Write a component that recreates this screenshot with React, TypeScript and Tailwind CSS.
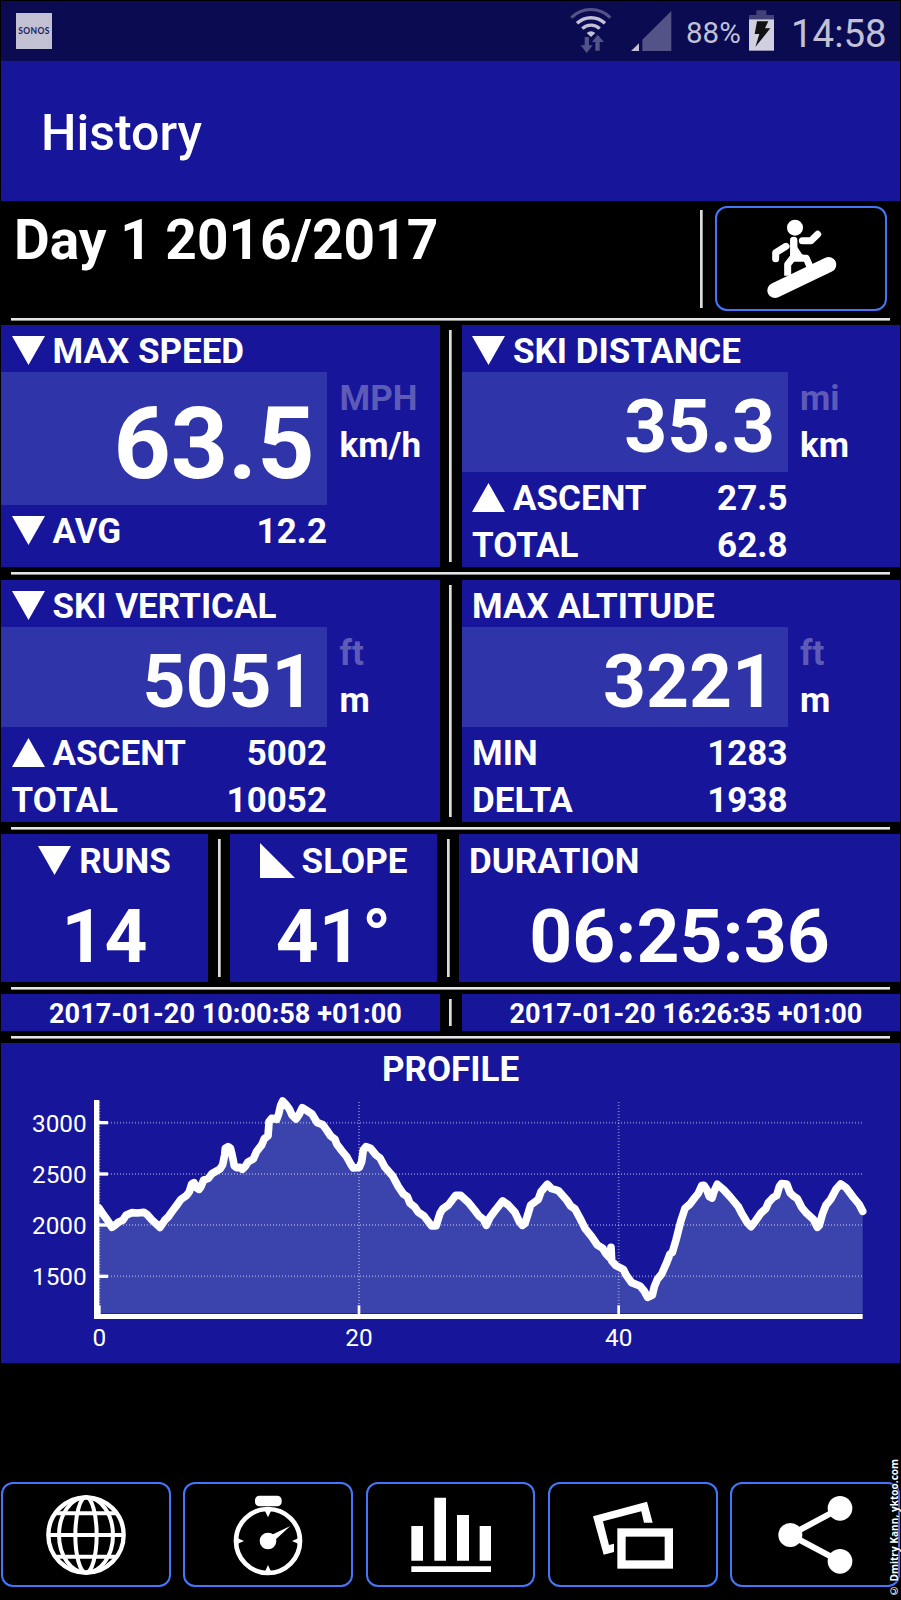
import React from 'react';

interface RowProps {
  icon?: 'down' | 'up';
  label: string;
  value?: string;
}

interface StatPanelProps {
  title: string;
  icon?: 'down' | 'up';
  value: string;
  units: [string, string];
  rows: RowProps[];
  large?: boolean;
}

const Triangle: React.FC<{ dir: 'down' | 'up' }> = ({ dir }) => (
  <svg width="33" height="29" viewBox="0 0 33 29" className="mr-2 shrink-0" fill="#fff">
    <path d={dir === 'down' ? 'M0 0H33L16.5 29Z' : 'M0 29H33L16.5 0Z'} />
  </svg>
);

const HLine: React.FC<{ tall?: boolean }> = ({ tall }) => (
  <div className={`flex shrink-0 items-center px-2.5 ${tall ? 'h-[13px]' : 'h-3'}`}>
    <div className="h-[3px] w-full border-b border-[#8a8a8a] bg-[#e4e4e4]" />
  </div>
);

const VLine: React.FC = () => (
  <div className="flex w-[22px] shrink-0 justify-center py-[5px]">
    <div className="w-[3px] border-r border-[#9a9a9a] bg-[#dcdcdc]" />
  </div>
);

const Row: React.FC<RowProps> = ({ icon, label, value }) => (
  <div className="flex h-[47.3px] w-[326px] items-center pl-[10.5px] pt-1">
    {icon && <Triangle dir={icon} />}
    <span className="pt-[2px]">{label}</span>
    {value && <span className="ml-auto pt-[2px]">{value}</span>}
  </div>
);

const StatPanel: React.FC<StatPanelProps> = ({ title, icon, value, units, rows, large }) => (
  <section className="flex-1 bg-[#17159a]">
    <Row icon={icon} label={title} />
    <div className="flex">
      <div
        className={`flex w-[326px] items-center justify-end bg-[#2f35a9] pr-[12.5px] ${
          large ? 'h-[132.7px] pt-2.5 text-[100px]' : 'h-[100px] pt-[7px] text-[75px]'
        }`}
      >
        {value}
      </div>
      <div className="pl-[12.5px] pt-[3px] leading-[47px]">
        <p className="text-[#5d5bb7]">{units[0]}</p>
        <p>{units[1]}</p>
      </div>
    </div>
    {rows.map((row) => (
      <Row key={row.label} {...row} />
    ))}
  </section>
);

const IconButton: React.FC<{ children: React.ReactNode; className?: string }> = ({
  children,
  className = 'flex-1',
}) => (
  <button
    className={`flex h-[105px] items-center justify-center rounded-xl border-2 border-[#4377fb] bg-black ${className}`}
  >
    <svg width="80" height="80" viewBox="0 0 240 240" fill="#fff" className="overflow-visible">
      {children}
    </svg>
  </button>
);

const StatusBar: React.FC = () => (
  <div className="flex h-[60px] shrink-0 bg-[#0b0b52] text-[#c2c1d6]">
    <div className="ml-[15px] mt-3 flex h-9 w-9 items-center justify-center bg-[#c2c1d3] font-['Lato'] text-[8.5px] font-bold tracking-[0.4px] text-[#1b1a60]">
      SONOS
    </div>
    <svg width="102" height="60" viewBox="0 0 306 180" className="ml-auto mr-[14px]" fill="none">
      {/* Wifi */}
      <g transform="translate(0 -3)">
        <path d="M4 53A82 82 0 0 1 121 53" stroke="#545387" strokeWidth="9" />
        <path d="M21 70A61 61 0 0 1 105 70" stroke="#c2c1d6" strokeWidth="10" />
        <path d="M37 86A37 37 0 0 1 89 86" stroke="#c2c1d6" strokeWidth="10" />
        <path d="M50 99Q63 89 76 99L63 111Z" fill="#c2c1d6" />
        <path d="M44 111H57V136H68L50 159L32 136H44Z" fill="#545387" />
        <path d="M76 152H89V126H102L83 104L66 126H76Z" fill="#545387" />
      </g>
      {/* Signal */}
      <g transform="translate(0 -3)">
        <path d="M217 119L304 33V153H217Z" fill="#545387" />
        <path d="M207 130V153H183Z" fill="#c2c1d6" />
      </g>
    </svg>
    <span className="mt-[15px] w-[63px] text-[29.5px] leading-[35px]">88%</span>
    <svg width="25" height="41" viewBox="0 0 75 123" className="mt-[9px]">
      <path d="M22 1H52V15H75V28H0V15H22Z" fill="#424178" />
      <path d="M0 28H75V122H0Z" fill="#d1d0e0" />
      <path d="M24 34H58L48 55H64L19 111L31 72H17Z" fill="#111" />
    </svg>
    <span className="ml-[17px] mr-[14px] mt-[10px] w-[95px] text-[38.4px] leading-[46px]">14:58</span>
  </div>
);

const altitudeLine =
  '297,504 310,524 322,540 336,562 348,553 356,546 368,541 378,526 395,518 412,519 432,517 442,524 456,540 480,562 ' +
  '488,550 494,541 505,530 515,516 530,496 543,478 560,466 568,455 575,432 582,428 590,444 597,448 603,440 611,420 ' +
  '625,415 636,401 660,387 668,374 674,345 676,325 684,320 691,324 697,348 703,378 710,383 720,382 727,388 736,379 ' +
  '744,366 760,357 770,334 785,315 793,296 804,288 806,262 807,245 815,235 830,238 836,222 842,196 848,183 858,194 ' +
  '868,207 876,225 888,237 898,222 907,203 918,210 936,222 952,248 968,254 980,270 992,288 1005,298 1010,312 ' +
  '1025,332 1040,350 1052,372 1060,384 1078,382 1085,365 1090,330 1098,320 1112,325 1128,345 1140,354 1155,382 ' +
  '1178,408 1195,440 1210,462 1222,470 1230,490 1245,502 1255,517 1272,528 1295,558 1308,558 1320,520 1328,507 ' +
  '1345,495 1367,466 1382,466 1405,487 1425,512 1437,528 1450,538 1459,556 1470,532 1485,512 1508,483 1525,495 ' +
  '1545,517 1558,545 1567,556 1575,550 1583,525 1592,495 1615,478 1623,455 1642,433 1655,446 1675,452 1700,480 ' +
  '1712,498 1725,507 1740,535 1755,565 1775,590 1792,615 1808,625 1817,640 1831,655 1833,622 1835,662 1848,677 ' +
  '1870,688 1878,704 1895,728 1920,738 1932,752 1943,772 1957,765 1963,740 1972,718 1985,702 2000,668 2010,642 ' +
  '2017,637 2028,600 2042,545 2055,505 2070,492 2085,472 2095,460 2105,437 2112,436 2120,448 2128,470 2136,474 ' +
  '2142,455 2152,433 2170,448 2190,470 2215,500 2225,520 2242,548 2253,560 2265,545 2282,520 2298,505 2305,488 ' +
  '2320,472 2330,467 2338,440 2344,431 2360,432 2370,458 2380,468 2392,476 2405,502 2418,518 2440,538 2452,562 ' +
  '2458,556 2468,520 2478,495 2492,478 2508,448 2522,432 2538,443 2560,472 2578,494 2588,514';

const altitudeTicks = [
  { label: '3000', y: 248 },
  { label: '2500', y: 402 },
  { label: '2000', y: 555 },
  { label: '1500', y: 709 },
];

const distanceTicks = [
  { label: '0', x: 298 },
  { label: '20', x: 1077 },
  { label: '40', x: 1856 },
];

const ProfileChart: React.FC = () => (
  <svg width="899" height="273" viewBox="3 150 2697 819" className="block">
    <polygon points={`297,820 ${altitudeLine} 2588,820`} fill="#3b44ac" />

    {/* Grid */}
    <g stroke="#fff" strokeOpacity="0.38">
      {altitudeTicks.map((t) => (
        <path key={t.label} d={`M324 ${t.y}H2588`} strokeWidth="6" strokeDasharray="3 6" />
      ))}
      {distanceTicks.map((t) => (
        <path key={t.label} d={`M${t.x} 186V796`} strokeWidth="6" strokeDasharray="3 6" />
      ))}
    </g>

    <polyline
      points={altitudeLine}
      fill="none"
      stroke="#fff"
      strokeWidth="23"
      strokeLinecap="round"
      strokeLinejoin="round"
    />

    {/* Axes */}
    <path d="M282 180H298V822H2588V837H282Z" fill="#fff" />
    <g fill="#fff" fontSize="73" fontWeight="400">
      {altitudeTicks.map((t) => (
        <React.Fragment key={t.label}>
          <rect x="296" y={t.y - 5} width="28" height="10" />
          <text x="260" y={t.y + 27} textAnchor="end">
            {t.label}
          </text>
        </React.Fragment>
      ))}
      {distanceTicks.map((t) => (
        <React.Fragment key={t.label}>
          <rect x={t.x - 4} y="796" width="8" height="30" />
          <text x={t.x} y="919" textAnchor="middle">
            {t.label}
          </text>
        </React.Fragment>
      ))}
    </g>
  </svg>
);

export default function App() {
  return (
    <div className="relative flex h-[1600px] w-[901px] flex-col overflow-hidden bg-black p-px font-['Roboto',sans-serif] text-white">
      <StatusBar />

      <header className="flex h-[140px] shrink-0 items-center bg-[#17159a] pl-10 pt-[5px] text-[50px] font-medium">
        History
      </header>

      <div className="flex h-28 shrink-0 text-[55px] font-bold">
        <h1 className="pl-[13px] leading-[78px]">Day 1 2016/2017</h1>
        <div className="ml-auto mt-[9px] h-[98px] w-[3px] border-r border-[#9a9a9a] bg-[#dcdcdc]" />
        <IconButton className="ml-3 mr-[13px] mt-[5px] w-[172px]">
          <circle cx="102" cy="26" r="24" />
          <path d="M88 64Q88 54 98 54Q109 54 109 64V84L123 106L136 110H88Z" />
          <g fill="none" stroke="#fff" strokeWidth="21" strokeLinecap="round" strokeLinejoin="round">
            <path d="M124 65H150L170 46M75 82L44 101V119M98 64V110" />
            <path d="M80 170V136L94 118H136L150 150" strokeLinecap="butt" />
          </g>
          <path d="M42 214L203 137" stroke="#fff" strokeWidth="46" strokeLinecap="round" />
        </IconButton>
      </div>

      <main className="flex flex-col text-[35px] font-bold leading-[42px]">
        <HLine />
        <div className="flex h-[242px]">
          <StatPanel
            title="MAX SPEED"
            icon="down"
            value="63.5"
            units={['MPH', 'km/h']}
            rows={[{ icon: 'down', label: 'AVG', value: '12.2' }]}
            large
          />
          <VLine />
          <StatPanel
            title="SKI DISTANCE"
            icon="down"
            value="35.3"
            units={['mi', 'km']}
            rows={[
              { icon: 'up', label: 'ASCENT', value: '27.5' },
              { label: 'TOTAL', value: '62.8' },
            ]}
          />
        </div>

        <HLine tall />
        <div className="flex h-[242px]">
          <StatPanel
            title="SKI VERTICAL"
            icon="down"
            value="5051"
            units={['ft', 'm']}
            rows={[
              { icon: 'up', label: 'ASCENT', value: '5002' },
              { label: 'TOTAL', value: '10052' },
            ]}
          />
          <VLine />
          <StatPanel
            title="MAX ALTITUDE"
            value="3221"
            units={['ft', 'm']}
            rows={[
              { label: 'MIN', value: '1283' },
              { label: 'DELTA', value: '1938' },
            ]}
          />
        </div>

        <HLine />
        <div className="flex h-[148px]">
          <section className="flex w-[207px] flex-col items-center bg-[#17159a]">
            <div className="flex h-[48px] items-center pt-1">
              <Triangle dir="down" />
              <span className="pt-[3px]">RUNS</span>
            </div>
            <p className="pt-px text-[75px] leading-[107px]">14</p>
          </section>
          <VLine />
          <section className="flex w-[207px] flex-col items-center bg-[#17159a]">
            <div className="flex h-[48px] items-center pt-1">
              <svg width="35" height="35" viewBox="0 0 35 35" className="mr-[7px]" fill="#fff">
                <path d="M0 0L35 35H0Z" />
              </svg>
              <span className="pt-[3px]">SLOPE</span>
            </div>
            <p className="pt-px text-[75px] leading-[107px]">41°</p>
          </section>
          <VLine />
          <section className="flex flex-1 flex-col bg-[#17159a]">
            <div className="flex h-[48px] items-center pl-2.5 pt-1">
              <span className="pt-[3px]">DURATION</span>
            </div>
            <p className="pt-px text-center text-[75px] leading-[107px]">06:25:36</p>
          </section>
        </div>

        <HLine />
        <div className="flex h-[37px] text-[27.15px]">
          <div className="flex flex-1 items-center bg-[#17159a] pl-[48px] pt-[3px]">
            2017-01-20 10:00:58 +01:00
          </div>
          <VLine />
          <div className="flex flex-1 items-center bg-[#17159a] pl-[48px] pt-[3px]">
            2017-01-20 16:26:35 +01:00
          </div>
        </div>

        <HLine />
        <section className="h-80 bg-[#17159a]">
          <h2 className="h-[47px] pt-[6px] text-center">PROFILE</h2>
          <ProfileChart />
        </section>
      </main>

      <nav className="mb-3 mt-auto flex gap-[12.4px]">
        <IconButton>
          <g fill="none" stroke="#fff" strokeWidth="12">
            <circle cx="120" cy="120" r="113" strokeWidth="13" />
            <ellipse cx="120" cy="120" rx="32" ry="113" />
            <ellipse cx="120" cy="120" rx="81" ry="113" />
            <path d="M28 55H212M8 120H232M28 185H212" />
          </g>
        </IconButton>
        <IconButton>
          <rect x="81" y="2" width="80" height="32" rx="13" />
          <circle cx="120" cy="138" r="96" fill="none" stroke="#fff" strokeWidth="14" />
          <circle cx="120" cy="138" r="25" />
          <path d="M130 120L187 93L142 134Z" />
          <path d="M110 46H130L120 67ZM110 232H130L120 210ZM26 128V148L48 138ZM214 128V148L192 138Z" />
        </IconButton>
        <IconButton>
          <path d="M1 93H36V197H1ZM70 8H105V197H70ZM138 60H174V197H138ZM206 93H240V197H206ZM1 214H240V231H1Z" />
        </IconButton>
        <IconButton>
          <path d="M0 64L162 20L179 83H153L145 49L30 79L48 150L63 146V171L32 179Z" />
          <rect x="85.5" y="112.5" width="142" height="96" fill="none" stroke="#fff" strokeWidth="25" />
        </IconButton>
        <IconButton>
          <path d="M195 40L46 120L195 199" fill="none" stroke="#fff" strokeWidth="18" />
          <circle cx="46" cy="120" r="36" />
          <circle cx="195" cy="40" r="37" />
          <circle cx="195" cy="199" r="37" />
        </IconButton>
      </nav>

      <span className="absolute bottom-[2px] right-0 rotate-180 whitespace-nowrap font-['Open_Sans'] text-[10.1px] font-bold leading-[13px] [text-shadow:0_0_2px_#000,0_0_2px_#000] [writing-mode:vertical-rl]">
        © Dmitry Kann, yktoo.com
      </span>
    </div>
  );
}
